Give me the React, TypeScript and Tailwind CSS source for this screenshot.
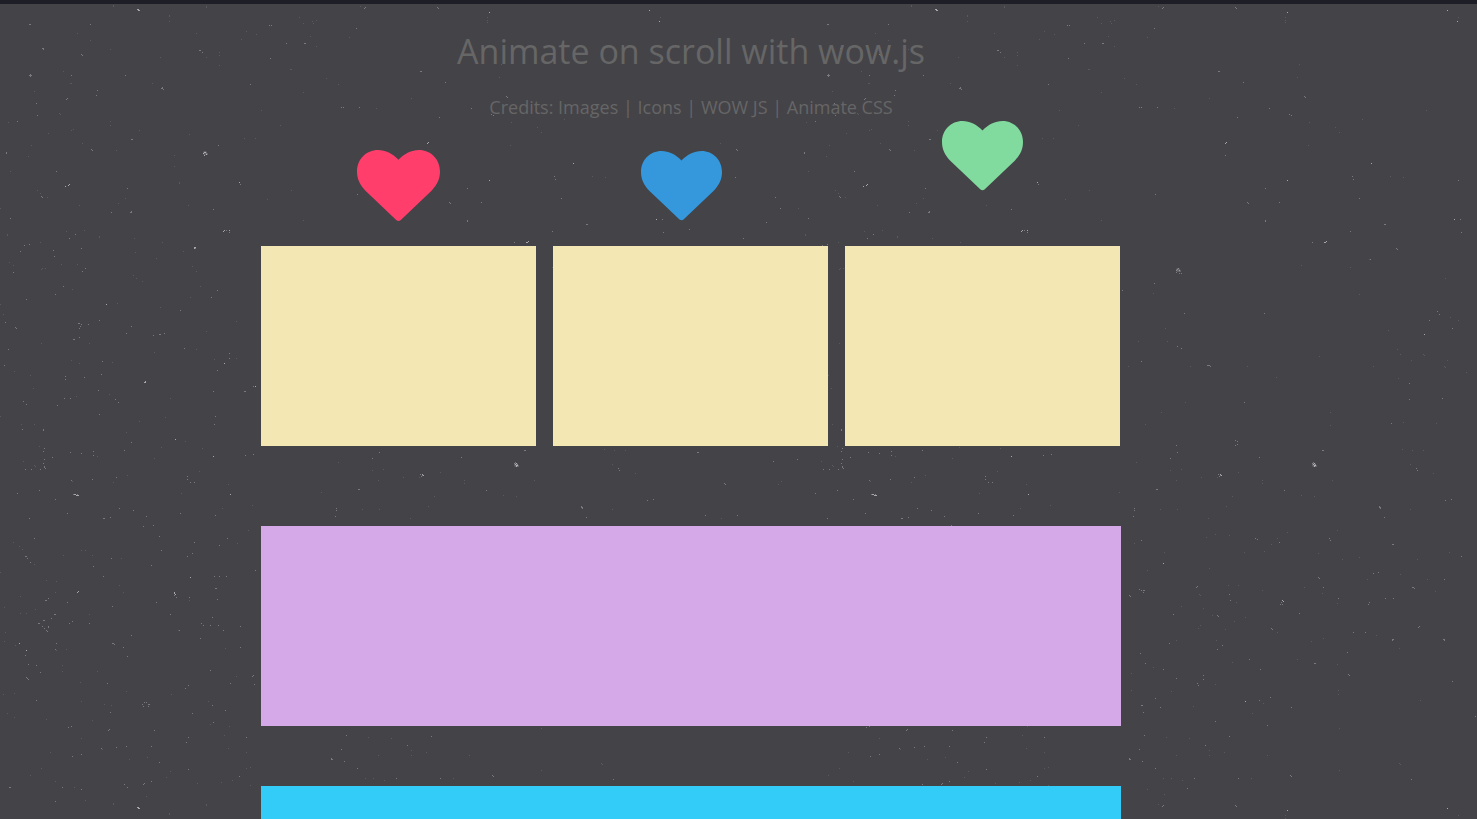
import React from "react";

const TILE = 798;

/* Dust specks of one background tile: x, y pairs grouped by brightness. */
const BRIGHT = [
  138, 9, 138, 10, 139, 10, 137, 9, 68, 185, 69, 184, 65, 186, 204, 152, 205, 152, 203, 153, 206, 154, 204, 155,
  239, 182, 223, 231, 224, 230, 229, 230, 194, 247, 194, 248, 195, 247, 106, 304, 145, 381, 144, 382, 145, 382,
  224, 363, 213, 456, 175, 439, 230, 494, 75, 494, 76, 495, 77, 495, 74, 494, 78, 495, 174, 592, 174, 593, 175, 594,
  190, 577, 78, 591, 77, 592, 19, 643, 26, 650, 138, 807, 138, 808, 139, 808, 489, 12, 649, 10, 659, 21, 489, 180,
  428, 142, 427, 143, 573, 163, 528, 241, 527, 242, 526, 242, 626, 334,
  516, 463, 515, 464, 516, 465, 517, 465, 516, 466, 422, 474, 423, 475, 484, 600, 485, 601, 365, 563,
  447, 701, 656, 219, 255, 386,
];

const MEDIUM = [
  29, 24, 30, 24, 90, 24, 42, 48, 43, 49, 43, 48, 81, 54, 82, 55, 30, 74, 30, 75, 31, 75, 29, 75, 30, 76, 71, 75, 125, 75,
  199, 50, 200, 50, 202, 52, 161, 88, 162, 88, 162, 87, 163, 89, 250, 84, 66, 99, 67, 98, 96, 95, 97, 90, 36, 103,
  37, 115, 17, 121, 6, 152, 6, 153, 132, 139, 131, 139, 91, 149, 92, 150, 56, 171, 41, 196, 42, 197, 127, 188,
  240, 184, 218, 145, 130, 212, 131, 212, 131, 211, 111, 212, 10, 218, 75, 234, 69, 238, 53, 250, 54, 256, 24, 245,
  29, 244, 20, 251, 213, 209, 195, 248, 229, 232, 226, 230, 13, 272, 82, 271, 85, 268, 63, 286, 55, 294, 26, 299,
  15, 327, 5, 322, 16, 328, 78, 323, 79, 323, 81, 324, 80, 326, 79, 328, 88, 324, 99, 320, 131, 326, 126, 333,
  73, 339, 74, 339, 79, 337, 159, 334, 160, 334, 164, 333, 153, 335, 8, 349, 4, 365, 102, 361, 101, 374, 98, 390,
  65, 376, 65, 379, 84, 377, 184, 348, 180, 310, 211, 297, 217, 290, 229, 353, 229, 358, 217, 370, 245, 391, 244, 391,
  253, 386, 57, 405, 64, 398, 70, 398, 115, 399, 118, 402, 23, 401, 26, 404, 99, 414, 22, 429, 43, 429, 43, 430,
  43, 451, 44, 459, 44, 467, 45, 468, 40, 469, 31, 469, 25, 469, 52, 457, 70, 452, 81, 453, 93, 451, 93, 455,
  131, 442, 124, 450, 215, 416, 214, 424, 245, 455, 253, 454, 187, 476, 187, 479, 190, 482, 194, 482, 116, 477,
  92, 479, 71, 480, 39, 490, 17, 493, 55, 499, 73, 494, 77, 494, 67, 513, 103, 518, 104, 518, 110, 517, 119, 508,
  133, 510, 153, 525, 143, 526, 146, 516, 180, 513, 215, 515, 29, 518, 34, 538, 26, 556, 25, 556, 27, 558, 30, 562,
  111, 558, 93, 566, 103, 576, 151, 565, 159, 536, 161, 550, 192, 553, 187, 556, 227, 538, 219, 545, 194, 542,
  255, 570, 214, 576, 219, 576, 226, 576, 216, 588, 215, 588, 217, 599, 189, 597, 174, 595, 176, 597, 46, 600, 45, 600,
  48, 598, 67, 602, 55, 614, 54, 614, 51, 618, 43, 620, 44, 620, 39, 623, 38, 623, 48, 626, 48, 627, 46, 630, 47, 631,
  42, 626, 44, 628, 69, 623, 72, 621, 89, 623, 112, 606, 156, 602, 170, 614, 201, 623, 203, 625, 210, 625, 218, 625,
  223, 630, 200, 638, 212, 617, 240, 626, 240, 647, 179, 630, 131, 635, 113, 643, 114, 644, 112, 643, 123, 647,
  127, 656, 56, 643, 55, 649, 25, 655, 28, 664, 36, 665, 27, 678, 26, 677, 28, 679, 40, 672, 107, 683, 36, 700,
  252, 676, 253, 675, 254, 684, 185, 688, 188, 685, 210, 670, 230, 683, 192, 713, 212, 705, 225, 710, 213, 722,
  144, 702, 146, 702, 148, 704, 148, 706, 143, 706, 142, 704, 149, 704, 110, 712, 71, 726, 68, 727, 109, 729, 108, 730,
  154, 730, 116, 747, 126, 746, 151, 746, 72, 756, 81, 754, 101, 748, 186, 742, 188, 737, 159, 762, 188, 769,
  239, 776, 246, 737, 9, 787, 10, 787, 62, 787, 81, 789, 124, 784, 127, 787, 143, 784, 144, 783, 151, 781, 55, 801,
  81, 248, 213, 391, 304, 43, 305, 43, 364, 8, 365, 7, 378, 445,
  269, 25, 271, 25, 356, 28, 286, 43, 270, 58, 421, 71, 420, 71, 445, 82, 341, 107, 343, 107, 439, 117, 506, 96, 507, 97,
  471, 108, 491, 114, 493, 115, 427, 155, 554, 176, 555, 179, 467, 188, 449, 202, 450, 203, 481, 202, 561, 198,
  467, 220, 467, 221, 586, 224, 587, 224, 598, 248, 599, 249, 552, 231, 514, 242, 572, 259, 357, 194, 359, 107,
  380, 268, 379, 269, 378, 270, 378, 272, 381, 270, 383, 273, 381, 273, 356, 283, 386, 313, 379, 346, 383, 348,
  410, 365, 411, 365, 412, 366, 409, 365, 343, 361, 639, 311, 641, 314, 654, 328, 631, 320,
  611, 383, 611, 399, 644, 398, 679, 371, 466, 313, 324, 290, 446, 402, 662, 219, 663, 232, 660, 180,
  437, 440, 439, 441, 439, 444, 437, 445, 461, 457, 524, 450, 525, 450, 379, 452, 372, 458, 515, 462,
  514, 463, 517, 464, 422, 475, 420, 474, 421, 476, 358, 489, 359, 489, 486, 490, 336, 508,
  336, 510, 335, 516, 581, 507, 582, 507, 582, 508, 581, 506, 586, 517, 619, 470, 618, 468, 653, 499,
  647, 500, 593, 423, 457, 538, 459, 539, 481, 542, 531, 538, 532, 540, 595, 544, 594, 544, 663, 556,
  575, 573, 580, 572, 615, 587, 614, 587, 616, 588, 646, 579, 520, 577, 521, 578, 525, 587, 540, 598, 571, 602,
  570, 604, 587, 598, 595, 598, 621, 626, 620, 627, 646, 639, 645, 639, 646, 640, 594, 639, 594, 640, 595, 639,
  567, 632, 555, 632, 549, 652, 550, 674, 551, 675, 517, 663, 516, 663, 483, 602, 482, 604, 484, 604, 501, 613,
  473, 628, 474, 629, 451, 659, 462, 669, 399, 586, 398, 587, 419, 615, 420, 616, 375, 614, 345, 590, 346, 590,
  343, 590, 345, 592, 331, 595, 332, 596, 341, 589, 343, 540, 432, 600, 431, 594, 419, 649,
  424, 645, 371, 643, 342, 653, 347, 663, 405, 675, 405, 679, 399, 683, 400, 685, 378, 678, 365, 669, 357, 698,
  343, 705, 344, 705, 362, 707, 345, 712, 472, 697, 461, 700, 493, 707, 469, 725, 417, 721, 431, 736, 346, 735,
  407, 745, 341, 749, 331, 758, 344, 761, 357, 768, 440, 778, 492, 775, 493, 776, 396, 778,
  613, 779, 654, 681, 677, 716, 331, 759, 332, 759, 437, 805, 438, 806, 389, 788,
  697, 452, 698, 452, 751, 445, 842, 448, 841, 463, 842, 466, 843, 468, 829, 469, 838, 469, 868, 452, 879, 453,
  725, 484, 724, 483, 705, 515, 737, 515, 773, 461, 797, 459,
  736, 149, 737, 150, 735, 177, 775, 197, 766, 222, 780, 208, 743, 238, 689, 229,
];

const FAINT = [
  113, 5, 206, 6, 169, 16, 169, 21, 196, 33, 90, 40, 246, 31, 241, 39, 160, 57, 206, 57, 219, 52, 219, 55, 219, 65,
  110, 49, 77, 33, 70, 83, 71, 83, 152, 83, 63, 71, 34, 91, 59, 113, 60, 114, 110, 121, 110, 125, 8, 122, 48, 133,
  73, 129, 71, 130, 82, 143, 31, 145, 28, 156, 116, 150, 189, 134, 139, 130, 174, 155, 174, 166, 179, 182, 179, 183,
  244, 138, 10, 171, 47, 197, 40, 193, 37, 190, 79, 205, 118, 203, 125, 198, 188, 205, 0, 208, 7, 234, 7, 235,
  84, 230, 66, 231, 99, 236, 99, 237, 134, 238, 40, 242, 135, 252, 162, 242, 183, 251, 61, 264, 77, 264, 45, 268,
  42, 268, 41, 269, 133, 275, 136, 278, 142, 281, 156, 258, 9, 262, 13, 265, 192, 266, 196, 271, 200, 286, 190, 297,
  72, 289, 117, 303, 160, 307, 3, 314, 0, 304, 236, 321, 206, 331, 196, 349, 154, 352, 89, 343, 41, 343, 71, 360,
  79, 363, 14, 371, 30, 375, 33, 388, 109, 394, 76, 396, 170, 398, 214, 359, 236, 358, 112, 362, 0, 416, 21, 424,
  34, 424, 139, 421, 165, 417, 126, 432, 161, 447, 39, 446, 97, 456, 23, 461, 34, 465, 35, 466, 72, 481, 127, 475,
  113, 482, 154, 458, 185, 441, 202, 448, 228, 484, 181, 493, 199, 471, 222, 508, 252, 505, 248, 530, 237, 543,
  13, 542, 19, 546, 22, 549, 34, 564, 63, 555, 92, 555, 81, 550, 85, 550, 121, 558, 0, 572, 46, 580, 56, 581, 119, 585,
  123, 592, 55, 592, 20, 596, 4, 607, 20, 613, 26, 613, 35, 609, 89, 614, 189, 600, 178, 630, 5, 632, 4, 641,
  15, 645, 56, 650, 66, 649, 62, 665, 62, 671, 97, 671, 126, 691, 14, 693, 3, 694, 80, 682, 81, 701, 104, 704, 111, 705,
  46, 719, 7, 713, 14, 717, 92, 720, 81, 738, 102, 749, 50, 752, 129, 759, 147, 757, 170, 771, 166, 777, 197, 783,
  232, 780, 221, 782, 250, 785, 41, 768, 30, 775, 74, 787, 55, 781, 113, 804, 85, 800, 146, 796, 206, 805, 169, 813,
  250, 767, 246, 752, 246, 768, 228, 748, 224, 735, 210, 724, 229, 726, 236, 676, 171, 694, 208, 701, 225, 648,
  299, 17, 316, 20, 312, 21, 313, 23, 303, 23, 349, 37, 256, 34, 310, 36, 316, 46, 290, 69, 291, 69, 303, 92,
  411, 98, 326, 78, 338, 84, 261, 110, 376, 108, 280, 125, 255, 138, 291, 190, 267, 199, 303, 220, 487, 17, 487, 20,
  487, 22, 660, 17, 501, 64, 499, 77, 537, 127, 541, 132, 510, 145, 592, 176, 605, 177, 564, 119, 511, 122, 628, 110,
  355, 293, 319, 302, 367, 328, 369, 341, 330, 366, 392, 366, 387, 402, 478, 377, 449, 366, 521, 356, 599, 349,
  575, 366, 600, 378, 590, 330, 561, 294, 571, 259, 552, 267, 503, 265, 647, 278, 625, 354, 626, 355, 649, 360,
  646, 366, 647, 367, 668, 372, 602, 354, 613, 360, 652, 317, 660, 320, 532, 412, 532, 425, 605, 422, 638, 423,
  614, 450, 604, 449, 612, 464, 625, 450, 378, 480, 403, 477, 347, 424, 363, 412, 372, 470, 383, 469, 440, 472,
  464, 483, 419, 477, 434, 496, 503, 495, 516, 496, 534, 480, 612, 509, 362, 509, 379, 509, 410, 518, 428, 506,
  489, 532, 539, 530, 417, 534, 431, 535, 408, 537, 473, 544, 479, 538, 466, 551, 366, 552, 411, 568, 430, 585,
  446, 552, 520, 553, 544, 559, 561, 557, 619, 559, 651, 552, 629, 579, 637, 591, 539, 603, 569, 579, 602, 574,
  401, 594, 402, 595, 438, 602, 440, 585, 464, 590, 524, 593, 405, 608, 383, 606, 402, 625, 400, 628, 414, 615,
  427, 629, 447, 617, 513, 641, 525, 638, 479, 632, 506, 587, 578, 635, 601, 648, 378, 640, 418, 640, 434, 662,
  499, 659, 355, 667, 333, 673, 333, 690, 373, 691, 395, 706, 417, 684, 436, 621, 539, 664, 622, 700, 540, 690,
  368, 737, 391, 738, 411, 750, 378, 755, 426, 752, 411, 755, 469, 755, 454, 713, 465, 703, 541, 728, 540, 694,
  601, 763, 602, 764, 365, 778, 373, 778, 384, 780, 366, 794, 349, 789, 360, 804, 453, 778, 541, 770, 680, 440,
  340, 341, 321, 492, 464, 480, 338, 462, 635, 473, 778, 484, 781, 481, 721, 518, 720, 143, 349, 570, 336, 543,
];

function specks(points: number[]) {
  const parts: string[] = [];
  for (let i = 0; i < points.length; i += 2) {
    const x = points[i] % TILE;
    const y = points[i + 1] % TILE;
    parts.push(`M${x} ${y}h1v1h-1z`);
  }
  return parts.join("");
}

function Clump({ x, y }: { x: number; y: number }) {
  return (
    <g transform={`translate(${x} ${y})`} fill="#c8c8cc">
      <circle cx="0" cy="0" r="2" opacity="0.25" />
      <circle cx="2" cy="1" r="1" opacity="0.3" />
    </g>
  );
}

function DustBackground() {
  return (
    <svg aria-hidden="true" className="absolute inset-0 -z-10 size-full">
      <defs>
        <pattern id="dust" width={TILE} height={TILE} patternUnits="userSpaceOnUse">
          <path d={specks(FAINT)} fill="#5a5a5e" />
          <path d={specks(MEDIUM)} fill="#7a7a7e" />
          <path d={specks(BRIGHT)} fill="#a8a8ac" />
          <Clump x={205} y={153} />
          <Clump x={380} y={270} />
          <Clump x={516} y={465} />
        </pattern>
      </defs>
      <rect width="100%" height="100%" fill="url(#dust)" />
    </svg>
  );
}

function Heart({ className }: { className: string }) {
  return (
    <svg viewBox="0 0 81 70" aria-hidden="true" className={className} fill="currentColor">
      <path d="M40.5 9.5C34.5 3.5 28 0 20.5 0C9 0 0 9 0 21C0 28.5 3 34 8 39.5L38.5 68.5Q40.5 70 42.5 68.5L73 39.5C78 34 81 28.5 81 21C81 9 72 0 60.5 0C53 0 46.5 3.5 40.5 9.5Z" />
    </svg>
  );
}

const HEARTS = [
  "w-[83px] text-[#ff3e6c]",
  "w-[81px] -translate-x-[9px] text-[#3598dc]",
  "w-[81px] -translate-y-[30px] text-[#81db9e]",
];

export default function App() {
  return (
    <div className="relative isolate h-screen overflow-hidden bg-[#444348] font-['Open_Sans',sans-serif] text-[#666666]">
      <DustBackground />
      <div className="h-1 bg-[#1e1f26]" />
      <div className="pr-[95px]">
        <main className="mx-auto max-w-[860px]">
          <header className="pt-[23px] text-center">
            <h1 className="text-[34px] leading-12">Animate on scroll with wow.js</h1>
            <p className="mt-5 text-lg leading-6">
              Credits: <a href="#images">Images</a> | <a href="#icons">Icons</a> |{" "}
              <a href="#wow">WOW JS</a> | <a href="#animate">Animate CSS</a>
            </p>
          </header>

          <section className="mt-[26px] grid grid-cols-3 gap-[17px] pr-px">
            {HEARTS.map((heart) => (
              <div key={heart}>
                <div className="flex h-[82px] items-center justify-center">
                  <Heart className={heart} />
                </div>
                <div className="mt-[19px] h-[200px] bg-[#f3e7b3]" />
              </div>
            ))}
          </section>

          <section className="mt-20 h-[200px] bg-[#d5a8e8]" />
          <section className="mt-15 h-[200px] bg-[#33ccf8]" />
        </main>
      </div>
    </div>
  );
}
